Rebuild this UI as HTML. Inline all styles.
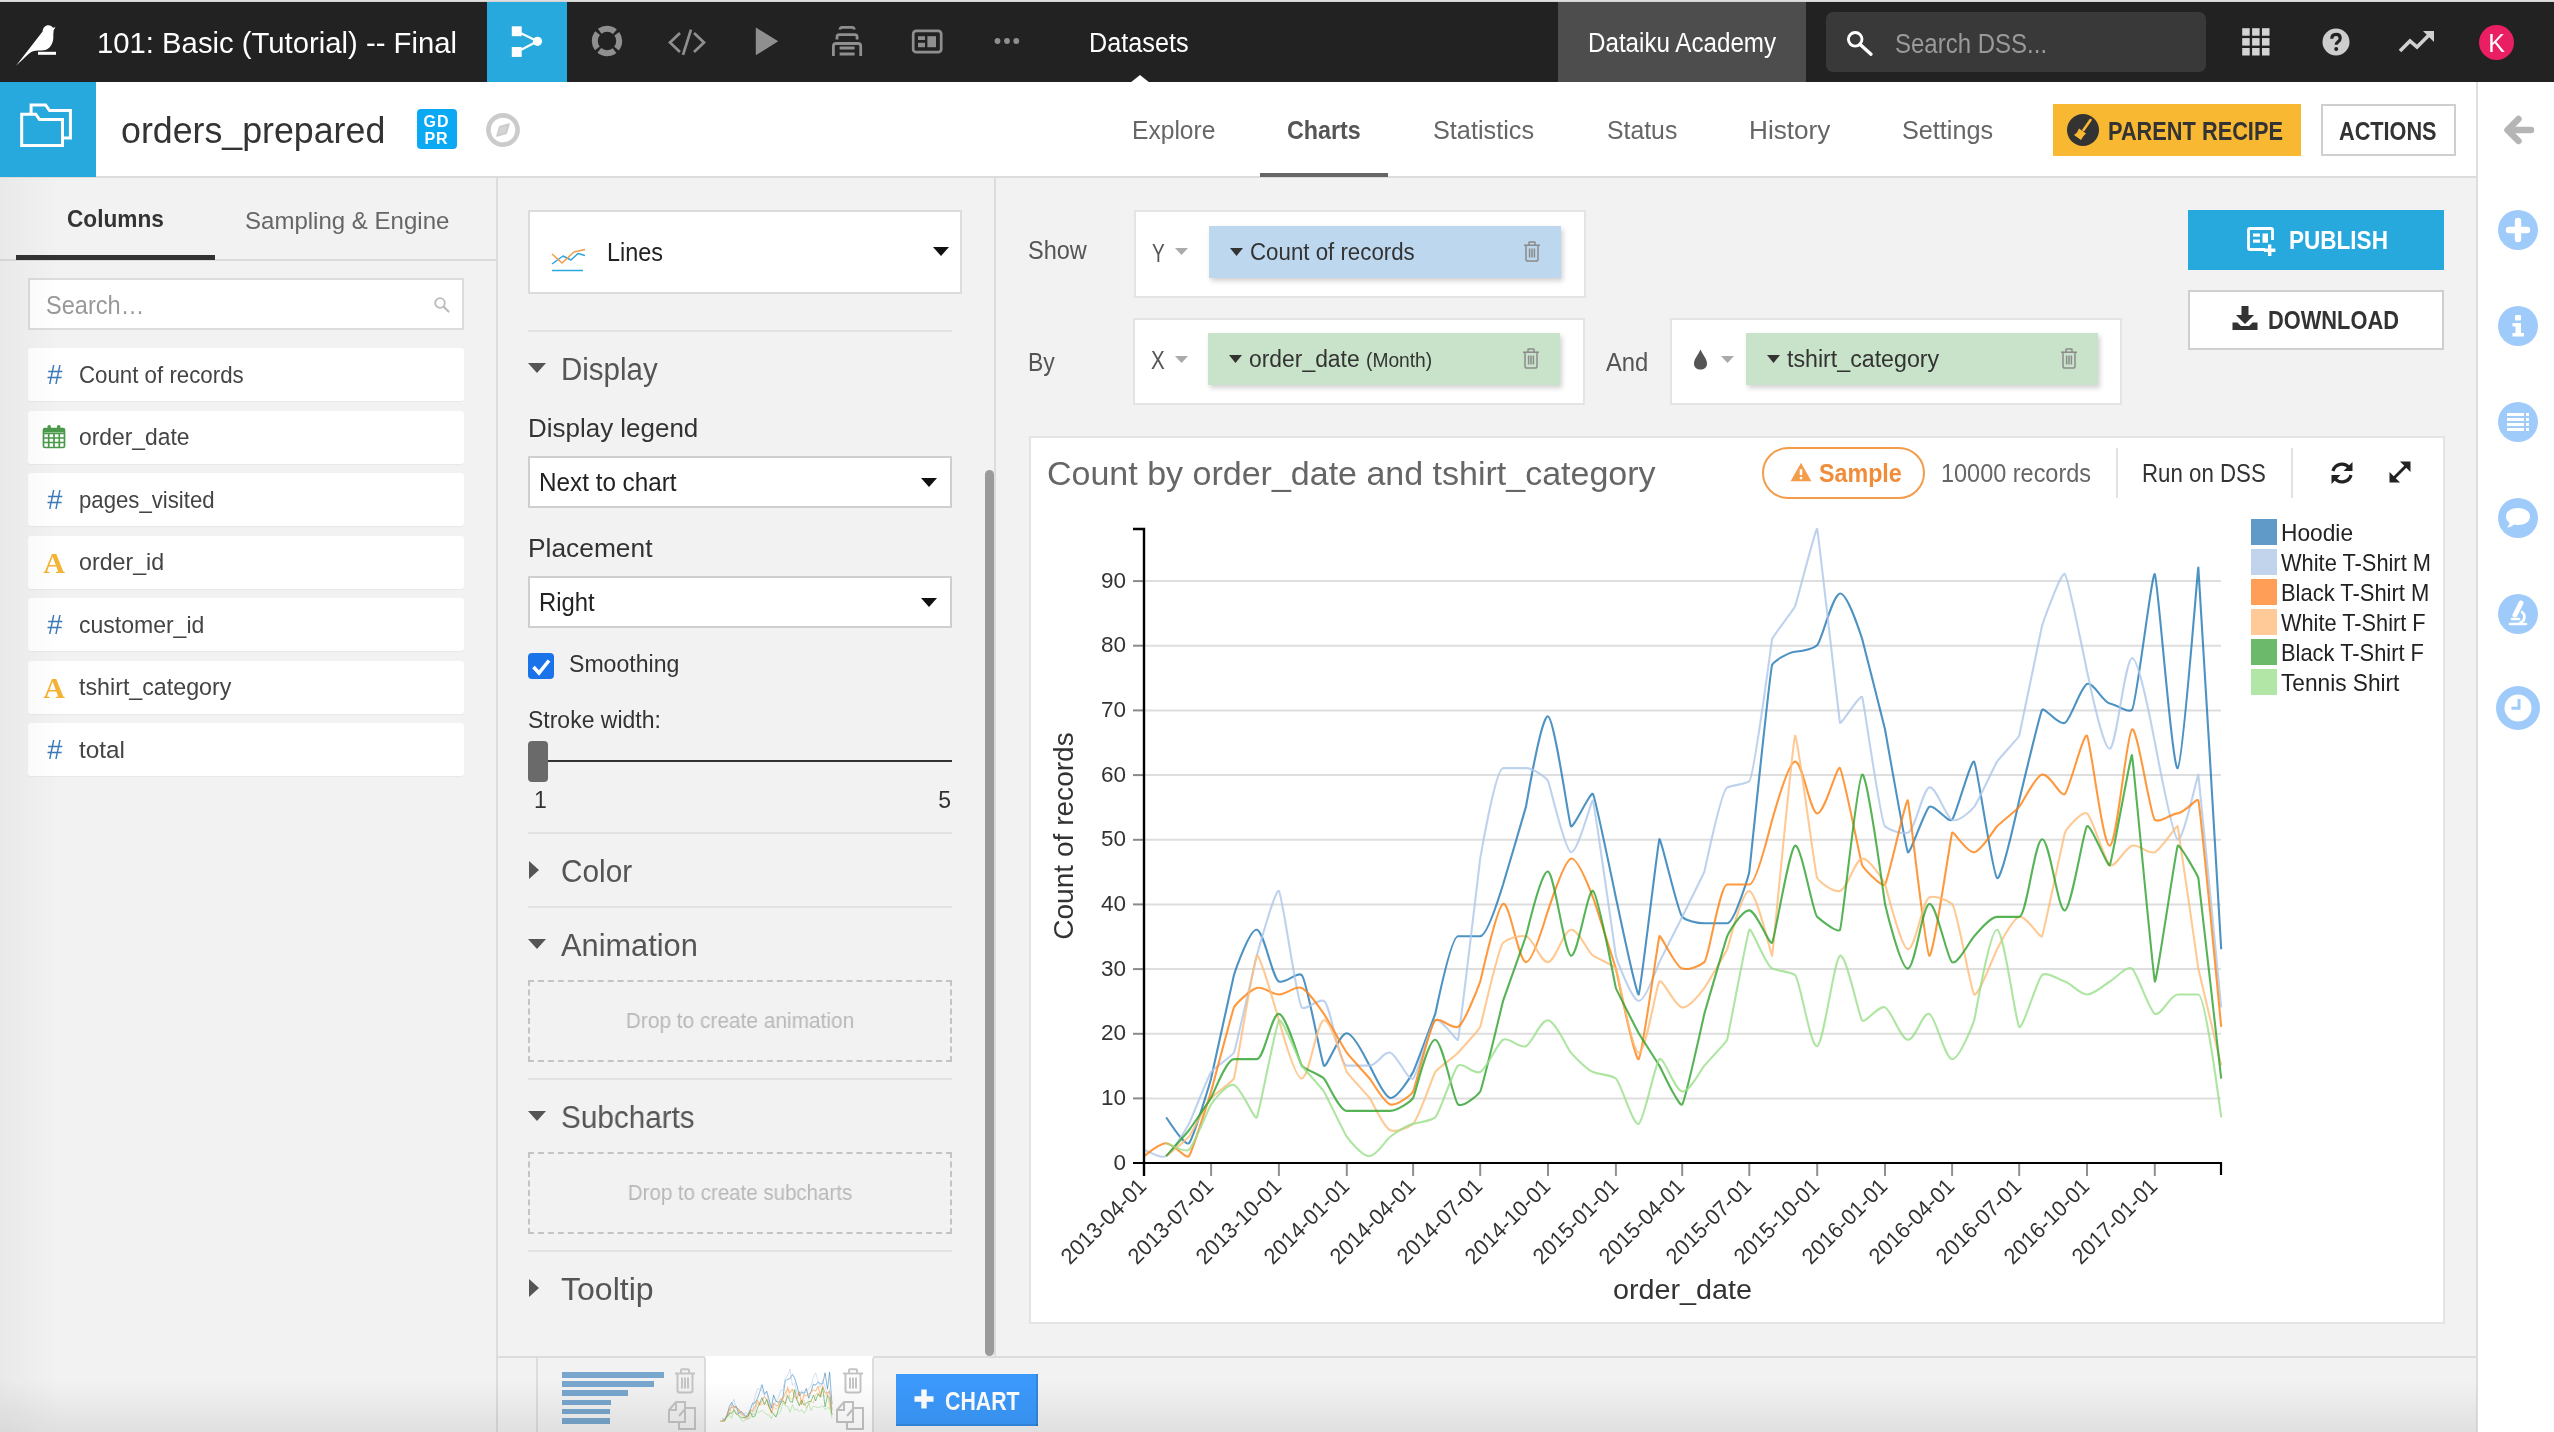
<!DOCTYPE html>
<html><head><meta charset="utf-8"><title>orders_prepared - Charts</title>
<style>
html,body{margin:0;padding:0;}
body{width:2554px;height:1432px;position:relative;overflow:hidden;background:#f2f2f2;font-family:"Liberation Sans",sans-serif;}
#app{position:absolute;left:0;top:0;width:2554px;height:1432px;will-change:transform;}
.r{position:absolute;box-sizing:border-box;display:block;}
.t{position:absolute;white-space:nowrap;line-height:1;display:block;}
</style></head>
<body>
<div id="app">
<div class="r" style="left:0px;top:0px;width:2554px;height:82px;background:#222222;"></div>
<div class="r" style="left:0px;top:0px;width:2554px;height:2px;background:linear-gradient(#e4e4e4,#cfcfcf);"></div>
<svg class="r" style="left:14px;top:22px;" width="46" height="46" viewBox="0 0 46 46"><path d="M2,43.8 L28.6,9.6 C28.8,5.6 31.4,3.2 34.3,3.2 C36.5,3.2 38,4.2 39,5.7 L41.5,5.3 L39.6,8.2 C39.7,10 39.2,12 39.3,14 C39.6,18 38.6,21 37,23.6 C35,26.6 33,28 30,28.3 C26,28.6 22,28.3 19,29.3 C16,30.3 13.6,32.8 11.6,34.8 Z" fill="#fff"/><rect x="24" y="29.8" width="18" height="3" fill="#fff"/></svg>
<span id="t1" class="t m" style="left:97.0px;top:28.0px;font-size:30px;color:#fff;font-weight:400;font-family:'Liberation Sans', sans-serif;transform-origin:left center;transform:scaleX(0.9756);">101: Basic (Tutorial) -- Final</span>
<div class="r" style="left:487px;top:2px;width:80px;height:80px;background:#28a9dd;"></div>
<svg class="r" style="left:508px;top:24px;" width="38" height="36" viewBox="0 0 38 36"><g fill="#fff"><rect x="3.8" y="2.3" width="9.9" height="9.9"/><rect x="3.8" y="23" width="9.9" height="9.9"/><circle cx="29.5" cy="17.3" r="4.6"/></g><path d="M8.8,7.2 L29.5,17.3 L8.8,28" fill="none" stroke="#fff" stroke-width="2.2"/></svg>
<svg class="r" style="left:590px;top:24.2px;" width="34" height="34" viewBox="0 0 34 34"><circle cx="17" cy="17" r="12.2" fill="none" stroke="#8f8f8f" stroke-width="6" stroke-dasharray="16.4 2.76" stroke-dashoffset="8.2"/></svg>
<svg class="r" style="left:666px;top:27px;" width="42" height="30" viewBox="0 0 42 30"><g fill="none" stroke="#8f8f8f" stroke-width="2.7" stroke-linecap="butt" stroke-linejoin="miter"><path d="M14,6 L4,15.5 L14,25"/><path d="M28,6 L38,15.5 L28,25"/><path d="M25,2.6 L17,27.8"/></g></svg>
<svg class="r" style="left:752px;top:26px;" width="28" height="32" viewBox="0 0 28 32"><path d="M3.8,1.4 L26.2,15.3 L3.8,29.3 Z" fill="#8f8f8f"/></svg>
<svg class="r" style="left:829px;top:24px;" width="36" height="34" viewBox="0 0 36 34"><g fill="none" stroke="#8f8f8f" stroke-width="2.8"><path d="M11,5.6 Q11,3.4 13.2,3.4 H23 Q25.2,3.4 25.2,5.6"/><path d="M8,15.6 V13 Q8,10.7 10.3,10.7 H25.8 Q28.1,10.7 28.1,13 V15.6"/><path d="M4.4,32 V22.2 Q4.4,19.5 7.1,19.5 H29 Q31.7,19.5 31.7,22.2 V32"/><path d="M10.6,24 H25.6 M10.6,30 H25.6"/></g></svg>
<svg class="r" style="left:910px;top:27px;" width="34" height="28" viewBox="0 0 34 28"><rect x="3.2" y="3.8" width="28" height="21.4" rx="3" fill="none" stroke="#8f8f8f" stroke-width="2.7"/><g fill="#8f8f8f"><rect x="8" y="9.2" width="7" height="3.8"/><rect x="8" y="15.8" width="7" height="4.4"/><rect x="17.4" y="9.2" width="8.6" height="11"/></g></svg>
<svg class="r" style="left:992px;top:36.2px;" width="30" height="10" viewBox="0 0 30 10"><g fill="#8f8f8f"><circle cx="5.5" cy="5" r="2.9"/><circle cx="15" cy="5" r="2.9"/><circle cx="24.3" cy="5" r="2.9"/></g></svg>
<span id="t2" class="t m" style="left:1089.0px;top:30.0px;font-size:27px;color:#fff;font-weight:400;font-family:'Liberation Sans', sans-serif;transform-origin:left center;transform:scaleX(0.9346);">Datasets</span>
<svg class="r" style="left:1130px;top:75px;" width="20" height="8" viewBox="0 0 20 8"><path d="M0,8 L10,0 L20,8 Z" fill="#fff"/></svg>
<div class="r" style="left:1558px;top:2px;width:248px;height:80px;background:#4d4d4d;"></div>
<span id="t3" class="t m" style="left:1588.0px;top:30.0px;font-size:27px;color:#fff;font-weight:400;font-family:'Liberation Sans', sans-serif;transform-origin:left center;transform:scaleX(0.8952);">Dataiku Academy</span>
<div class="r" style="left:1826px;top:12px;width:380px;height:60px;background:#393939;border-radius:7px;"></div>
<svg class="r" style="left:1842px;top:27px;" width="32" height="32" viewBox="0 0 32 32"><circle cx="13.2" cy="12.3" r="6.8" fill="none" stroke="#fff" stroke-width="2.9"/><path d="M18.2,17.4 L29,27.2" stroke="#fff" stroke-width="3.4" stroke-linecap="round"/></svg>
<span id="t4" class="t m" style="left:1895.0px;top:31.0px;font-size:27px;color:#9a9a9a;font-weight:400;font-family:'Liberation Sans', sans-serif;transform-origin:left center;transform:scaleX(0.8889);">Search DSS...</span>
<svg class="r" style="left:2242px;top:28.4px;" width="28" height="28" viewBox="0 0 28 28"><rect x="0.2" y="0.2" width="7.5" height="7.5" fill="#d4d4d4"/><rect x="0.2" y="10.1" width="7.5" height="7.5" fill="#d4d4d4"/><rect x="0.2" y="20" width="7.5" height="7.5" fill="#d4d4d4"/><rect x="10.1" y="0.2" width="7.5" height="7.5" fill="#d4d4d4"/><rect x="10.1" y="10.1" width="7.5" height="7.5" fill="#d4d4d4"/><rect x="10.1" y="20" width="7.5" height="7.5" fill="#d4d4d4"/><rect x="20" y="0.2" width="7.5" height="7.5" fill="#d4d4d4"/><rect x="20" y="10.1" width="7.5" height="7.5" fill="#d4d4d4"/><rect x="20" y="20" width="7.5" height="7.5" fill="#d4d4d4"/></svg>
<svg class="r" style="left:2321px;top:26.8px;" width="30" height="30" viewBox="0 0 30 30"><circle cx="15" cy="15" r="13.5" fill="#cdcdcd"/><path d="M10.8,11.8 Q10.8,7.4 15,7.4 Q19.2,7.4 19.2,11.2 Q19.2,13.4 17,14.8 Q15.2,16 15.2,17.8" fill="none" stroke="#222" stroke-width="3.2"/><circle cx="15.2" cy="22" r="2" fill="#222"/></svg>
<svg class="r" style="left:2398px;top:29px;" width="38" height="26" viewBox="0 0 38 26"><path d="M2,22 L12,12 L19,18 L32,5" fill="none" stroke="#d0d0d0" stroke-width="3.6"/><path d="M25,2 L36,2 L36,13 Z" fill="#d0d0d0"/></svg>
<div class="r" style="left:2479px;top:24.5px;width:35px;height:35px;background:#ea1e63;border-radius:50%;"></div>
<span id="t5" class="t" style="left:2496.5px;top:30.7px;font-size:25px;color:#fff;font-weight:400;font-family:'Liberation Sans', sans-serif;transform-origin:center center;transform:translateX(-50%) scaleX(1.0000);">K</span>
<div class="r" style="left:0px;top:82px;width:2477px;height:95px;background:#fff;"></div>
<div class="r" style="left:0px;top:176px;width:2554px;height:2px;background:#dcdcdc;"></div>
<div class="r" style="left:0px;top:82px;width:96px;height:95px;background:#28a9dd;"></div>
<svg class="r" style="left:18px;top:101px;" width="56" height="48" viewBox="0 0 56 48"><g fill="none" stroke="#fff" stroke-width="3" stroke-linejoin="miter"><path d="M13.1,12 V4 H27.6 L31.5,9.5 H52.4 V36.9 H46"/><path d="M3.7,13.2 H17.8 L21.5,18.5 H44.5 V44.5 H3.7 Z"/></g></svg>
<span id="t6" class="t m" style="left:121.0px;top:112.2px;font-size:37.5px;color:#333;font-weight:400;font-family:'Liberation Sans', sans-serif;transform-origin:left center;transform:scaleX(0.9531);">orders_prepared</span>
<div class="r" style="left:416.5px;top:109px;width:40px;height:40px;background:#0aa9f4;border-radius:4px;"></div>
<span id="t7" class="t" style="left:436.5px;top:114.4px;font-size:16px;color:#fff;font-weight:700;font-family:'Liberation Sans', sans-serif;transform-origin:center center;transform:translateX(-50%) scaleX(1.0000);letter-spacing:1px;">GD</span>
<span id="t8" class="t" style="left:436.5px;top:131.4px;font-size:16px;color:#fff;font-weight:700;font-family:'Liberation Sans', sans-serif;transform-origin:center center;transform:translateX(-50%) scaleX(1.0000);letter-spacing:1px;">PR</span>
<svg class="r" style="left:485px;top:112px;" width="36" height="36" viewBox="0 0 36 36"><circle cx="18" cy="18" r="14.6" fill="none" stroke="#cbcbcb" stroke-width="4.6"/><path d="M24,12 L21.2,21.2 L12,24 L14.8,14.8 Z" fill="#d4d4d4" stroke="#cbcbcb" stroke-width="1.6" stroke-linejoin="round"/></svg>
<span id="t9" class="t m" style="left:1132.0px;top:118.3px;font-size:25.5px;color:#666;font-weight:400;font-family:'Liberation Sans', sans-serif;transform-origin:left center;transform:scaleX(0.9651);">Explore</span>
<span id="t10" class="t m" style="left:1287.0px;top:118.3px;font-size:25.5px;color:#555;font-weight:700;font-family:'Liberation Sans', sans-serif;transform-origin:left center;transform:scaleX(0.9136);">Charts</span>
<span id="t11" class="t m" style="left:1433.0px;top:118.3px;font-size:25.5px;color:#666;font-weight:400;font-family:'Liberation Sans', sans-serif;transform-origin:left center;transform:scaleX(0.9902);">Statistics</span>
<span id="t12" class="t m" style="left:1607.0px;top:118.3px;font-size:25.5px;color:#666;font-weight:400;font-family:'Liberation Sans', sans-serif;transform-origin:left center;transform:scaleX(0.9722);">Status</span>
<span id="t13" class="t m" style="left:1749.0px;top:118.3px;font-size:25.5px;color:#666;font-weight:400;font-family:'Liberation Sans', sans-serif;transform-origin:left center;transform:scaleX(1.0253);">History</span>
<span id="t14" class="t m" style="left:1902.0px;top:118.3px;font-size:25.5px;color:#666;font-weight:400;font-family:'Liberation Sans', sans-serif;transform-origin:left center;transform:scaleX(0.9891);">Settings</span>
<div class="r" style="left:1260px;top:173px;width:128px;height:4.4px;background:#666;"></div>
<div class="r" style="left:2053px;top:104px;width:248px;height:52px;background:#f9b832;"></div>
<svg class="r" style="left:2066px;top:113px;" width="34" height="34" viewBox="0 0 34 34"><circle cx="17" cy="17" r="16" fill="#333"/><path d="M24.5,7 L17.5,17" stroke="#f9b832" stroke-width="2.6" stroke-linecap="round"/><path d="M13,15.5 L20,20.5 L17.5,23 L15,27 L8,22 L11,19.5 Z" fill="#f9b832"/></svg>
<span id="t15" class="t m" style="left:2108.0px;top:119.2px;font-size:25px;color:#333;font-weight:700;font-family:'Liberation Sans', sans-serif;transform-origin:left center;transform:scaleX(0.8706);">PARENT RECIPE</span>
<div class="r" style="left:2321px;top:104px;width:135px;height:52px;background:#fff;border:2px solid #cfcfcf;"></div>
<span id="t16" class="t m" style="left:2339.0px;top:119.2px;font-size:25px;color:#333;font-weight:700;font-family:'Liberation Sans', sans-serif;transform-origin:left center;transform:scaleX(0.8673);">ACTIONS</span>
<div class="r" style="left:2477px;top:82px;width:77px;height:1350px;background:#fff;"></div>
<div class="r" style="left:2476px;top:82px;width:2px;height:1350px;background:#dedede;"></div>
<svg class="r" style="left:2502px;top:114px;" width="34" height="32" viewBox="0 0 34 32"><path d="M29,16 H9 M16.5,5 L5.5,16 L16.5,27" fill="none" stroke="#b5b5b5" stroke-width="6.5" stroke-linejoin="round" stroke-linecap="round"/></svg>
<div class="r" style="left:2498px;top:210px;width:40px;height:40px;background:#9fcbfb;border-radius:50%;"></div>
<div class="r" style="left:2498px;top:306px;width:40px;height:40px;background:#9fcbfb;border-radius:50%;"></div>
<div class="r" style="left:2498px;top:402px;width:40px;height:40px;background:#9fcbfb;border-radius:50%;"></div>
<div class="r" style="left:2498px;top:498px;width:40px;height:40px;background:#9fcbfb;border-radius:50%;"></div>
<div class="r" style="left:2498px;top:594px;width:40px;height:40px;background:#9fcbfb;border-radius:50%;"></div>
<div class="r" style="left:2496px;top:686px;width:44px;height:44px;background:#9fcbfb;border-radius:50%;"></div>
<svg class="r" style="left:2497px;top:209px;" width="42" height="42" viewBox="0 0 42 42"><path d="M21,12 V30 M12,21 H30" stroke="#fff" stroke-width="6.4" stroke-linecap="round"/></svg>
<svg class="r" style="left:2497px;top:305px;" width="42" height="42" viewBox="0 0 42 42"><g fill="#fff"><rect x="18" y="10" width="6" height="5.5" rx="1"/><path d="M15.5,18 H24 V28 H27 V31.5 H15.5 V28 H18.5 V21.5 H15.5 Z"/></g></svg>
<svg class="r" style="left:2497px;top:401px;" width="42" height="42" viewBox="0 0 42 42"><g fill="#fff"><rect x="10" y="12" width="17" height="3"/><rect x="10" y="17" width="17" height="3"/><rect x="10" y="22" width="17" height="3"/><rect x="10" y="27" width="17" height="3"/><rect x="29" y="12" width="3" height="3"/><rect x="29" y="17" width="3" height="3"/><rect x="29" y="22" width="3" height="3"/><rect x="29" y="27" width="3" height="3"/></g></svg>
<svg class="r" style="left:2497px;top:497px;" width="42" height="42" viewBox="0 0 42 42"><path d="M21,11 C28,11 33,14.5 33,19.5 C33,24.5 28,28 21,28 C19.5,28 18,27.8 17,27.5 C15,29.5 12.5,30.5 10,30.5 C11.5,29 12.3,27.5 12.5,25.5 C10,24 9,22 9,19.5 C9,14.5 14,11 21,11 Z" fill="#fff"/></svg>
<svg class="r" style="left:2497px;top:593px;" width="42" height="42" viewBox="0 0 42 42"><g fill="none" stroke="#fff" stroke-width="2.6" stroke-linecap="round"><path d="M24,10 L18,22" stroke-width="5"/><path d="M25,19 C29,22 28,28 23,30"/><path d="M13,31 H29"/><path d="M15,26 H22"/></g></svg>
<svg class="r" style="left:2495px;top:685px;" width="46" height="46" viewBox="0 0 46 46"><circle cx="23" cy="23" r="13.5" fill="#fff"/><path d="M24,14 V23.2 H16.4" fill="none" stroke="#9fcbfb" stroke-width="3"/></svg>
<div class="r" style="left:496px;top:178px;width:2px;height:1254px;background:#dcdcdc;"></div>
<span id="t17" class="t m" style="left:67.0px;top:207.2px;font-size:24.5px;color:#333;font-weight:700;font-family:'Liberation Sans', sans-serif;transform-origin:left center;transform:scaleX(0.9238);">Columns</span>
<span id="t18" class="t m" style="left:245.0px;top:209.2px;font-size:24.5px;color:#666;font-weight:400;font-family:'Liberation Sans', sans-serif;transform-origin:left center;transform:scaleX(0.9808);">Sampling &amp; Engine</span>
<div class="r" style="left:0px;top:259px;width:497px;height:2px;background:#dcdcdc;"></div>
<div class="r" style="left:16px;top:255px;width:199px;height:5px;background:#333;"></div>
<div class="r" style="left:28px;top:278px;width:436px;height:52px;background:#fff;border:2px solid #dcdcdc;"></div>
<span id="t19" class="t m" style="left:46.0px;top:292.7px;font-size:25px;color:#999;font-weight:400;font-family:'Liberation Sans', sans-serif;transform-origin:left center;transform:scaleX(0.9423);">Search&#8230;</span>
<svg class="r" style="left:433px;top:296px;" width="18" height="18" viewBox="0 0 18 18"><circle cx="7" cy="7" r="4.8" fill="none" stroke="#bbb" stroke-width="1.8"/><path d="M10.5,10.5 L15.5,15.5" stroke="#bbb" stroke-width="2.2" stroke-linecap="round"/></svg>
<div class="r" style="left:28px;top:348px;width:436px;height:53px;background:#fff;border-radius:3px;box-shadow:0 1px 1px rgba(0,0,0,0.04);"></div>
<span id="t20" class="t" style="left:54.5px;top:362.0px;font-size:27px;color:#3d7ab8;font-weight:400;font-family:'Liberation Sans', sans-serif;transform-origin:center center;transform:translateX(-50%) scaleX(1.0000);font-style:italic;">#</span>
<span id="t21" class="t m" style="left:79.0px;top:362.8px;font-size:24.3px;color:#444;font-weight:400;font-family:'Liberation Sans', sans-serif;transform-origin:left center;transform:scaleX(0.9167);">Count of records</span>
<div class="r" style="left:28px;top:410.5px;width:436px;height:53px;background:#fff;border-radius:3px;box-shadow:0 1px 1px rgba(0,0,0,0.04);"></div>
<svg class="r" style="left:42px;top:424px;" width="24" height="25" viewBox="0 0 24 25"><g fill="none" stroke="#4b9a4b" stroke-width="1.7"><rect x="1.5" y="4.5" width="21" height="19" rx="1.5"/><path d="M1.5,9.5 H22.5 M1.5,14 H22.5 M1.5,18.5 H22.5 M6.7,9.5 V23.5 M12,9.5 V23.5 M17.3,9.5 V23.5"/></g><g fill="#4b9a4b"><rect x="1.5" y="4.5" width="21" height="4"/><rect x="5.5" y="1" width="3.4" height="6.5" rx="1.5"/><rect x="15" y="1" width="3.4" height="6.5" rx="1.5"/></g></svg>
<span id="t22" class="t m" style="left:79.0px;top:425.3px;font-size:24.3px;color:#444;font-weight:400;font-family:'Liberation Sans', sans-serif;transform-origin:left center;transform:scaleX(0.9407);">order_date</span>
<div class="r" style="left:28px;top:473px;width:436px;height:53px;background:#fff;border-radius:3px;box-shadow:0 1px 1px rgba(0,0,0,0.04);"></div>
<span id="t23" class="t" style="left:54.5px;top:487.0px;font-size:27px;color:#3d7ab8;font-weight:400;font-family:'Liberation Sans', sans-serif;transform-origin:center center;transform:translateX(-50%) scaleX(1.0000);font-style:italic;">#</span>
<span id="t24" class="t m" style="left:79.0px;top:487.8px;font-size:24.3px;color:#444;font-weight:400;font-family:'Liberation Sans', sans-serif;transform-origin:left center;transform:scaleX(0.9128);">pages_visited</span>
<div class="r" style="left:28px;top:535.5px;width:436px;height:53px;background:#fff;border-radius:3px;box-shadow:0 1px 1px rgba(0,0,0,0.04);"></div>
<span id="t25" class="t" style="left:54.0px;top:547.6px;font-size:30px;color:#f5b335;font-weight:700;font-family:'Liberation Serif', serif;transform-origin:center center;transform:translateX(-50%) scaleX(1.0000);">A</span>
<span id="t26" class="t m" style="left:79.0px;top:550.3px;font-size:24.3px;color:#444;font-weight:400;font-family:'Liberation Sans', sans-serif;transform-origin:left center;transform:scaleX(0.9551);">order_id</span>
<div class="r" style="left:28px;top:598px;width:436px;height:53px;background:#fff;border-radius:3px;box-shadow:0 1px 1px rgba(0,0,0,0.04);"></div>
<span id="t27" class="t" style="left:54.5px;top:612.0px;font-size:27px;color:#3d7ab8;font-weight:400;font-family:'Liberation Sans', sans-serif;transform-origin:center center;transform:translateX(-50%) scaleX(1.0000);font-style:italic;">#</span>
<span id="t28" class="t m" style="left:79.0px;top:612.8px;font-size:24.3px;color:#444;font-weight:400;font-family:'Liberation Sans', sans-serif;transform-origin:left center;transform:scaleX(0.9470);">customer_id</span>
<div class="r" style="left:28px;top:660.5px;width:436px;height:53px;background:#fff;border-radius:3px;box-shadow:0 1px 1px rgba(0,0,0,0.04);"></div>
<span id="t29" class="t" style="left:54.0px;top:672.6px;font-size:30px;color:#f5b335;font-weight:700;font-family:'Liberation Serif', serif;transform-origin:center center;transform:translateX(-50%) scaleX(1.0000);">A</span>
<span id="t30" class="t m" style="left:79.0px;top:675.3px;font-size:24.3px;color:#444;font-weight:400;font-family:'Liberation Sans', sans-serif;transform-origin:left center;transform:scaleX(0.9560);">tshirt_category</span>
<div class="r" style="left:28px;top:723px;width:436px;height:53px;background:#fff;border-radius:3px;box-shadow:0 1px 1px rgba(0,0,0,0.04);"></div>
<span id="t31" class="t" style="left:54.5px;top:737.0px;font-size:27px;color:#3d7ab8;font-weight:400;font-family:'Liberation Sans', sans-serif;transform-origin:center center;transform:translateX(-50%) scaleX(1.0000);font-style:italic;">#</span>
<span id="t32" class="t m" style="left:79.0px;top:737.8px;font-size:24.3px;color:#444;font-weight:400;font-family:'Liberation Sans', sans-serif;transform-origin:left center;">total</span>
<div class="r" style="left:994px;top:178px;width:2px;height:1180px;background:#dcdcdc;"></div>
<div class="r" style="left:985px;top:470px;width:9px;height:886px;background:#9b9b9b;border-radius:5px;"></div>
<div class="r" style="left:528px;top:210px;width:434px;height:84px;background:#fff;border:2px solid #dcdcdc;"></div>
<svg class="r" style="left:550px;top:244px;" width="38" height="30" viewBox="0 0 38 30"><g fill="none" stroke-width="1.5" stroke-linejoin="round"><path d="M2,26.5 H33" stroke="#2aa7dc"/><path d="M2,20 L13,12 L21,16 L28,9.5 L35,11.5" stroke="#2aa7dc"/><path d="M2,10 L12,19 L24,8 L35,5.5" stroke="#f39c4a"/></g></svg>
<span id="t33" class="t m" style="left:607.0px;top:240.3px;font-size:25.5px;color:#222;font-weight:400;font-family:'Liberation Sans', sans-serif;transform-origin:left center;transform:scaleX(0.9180);">Lines</span>
<svg class="r" style="left:933px;top:246.5px;" width="16" height="9" viewBox="0 0 16 9"><path d="M0,0 H16 L8,9 Z" fill="#111"/></svg>
<div class="r" style="left:528px;top:330px;width:424px;height:2px;background:#e2e2e2;"></div>
<svg class="r" style="left:528px;top:363px;" width="18" height="10" viewBox="0 0 18 10"><path d="M0,0 H18 L9,10 Z" fill="#555"/></svg>
<span id="t34" class="t m" style="left:561.0px;top:353.7px;font-size:31px;color:#555;font-weight:400;font-family:'Liberation Sans', sans-serif;transform-origin:left center;transform:scaleX(0.9510);">Display</span>
<span id="t35" class="t m" style="left:528.0px;top:416.3px;font-size:25.5px;color:#333;font-weight:400;font-family:'Liberation Sans', sans-serif;transform-origin:left center;transform:scaleX(1.0180);">Display legend</span>
<div class="r" style="left:528px;top:456px;width:424px;height:52px;background:#fff;border:2px solid #cfcfcf;"></div>
<span id="t36" class="t m" style="left:539.0px;top:470.3px;font-size:25.5px;color:#222;font-weight:400;font-family:'Liberation Sans', sans-serif;transform-origin:left center;transform:scaleX(0.9517);">Next to chart</span>
<svg class="r" style="left:921px;top:477.5px;" width="16" height="9" viewBox="0 0 16 9"><path d="M0,0 H16 L8,9 Z" fill="#111"/></svg>
<span id="t37" class="t m" style="left:528.0px;top:536.3px;font-size:25.5px;color:#333;font-weight:400;font-family:'Liberation Sans', sans-serif;transform-origin:left center;transform:scaleX(1.0333);">Placement</span>
<div class="r" style="left:528px;top:576px;width:424px;height:52px;background:#fff;border:2px solid #cfcfcf;"></div>
<span id="t38" class="t m" style="left:539.0px;top:590.3px;font-size:25.5px;color:#222;font-weight:400;font-family:'Liberation Sans', sans-serif;transform-origin:left center;transform:scaleX(0.9333);">Right</span>
<svg class="r" style="left:921px;top:597.5px;" width="16" height="9" viewBox="0 0 16 9"><path d="M0,0 H16 L8,9 Z" fill="#111"/></svg>
<div class="r" style="left:528px;top:653px;width:26px;height:26px;background:#1a73e8;border-radius:4px;"></div>
<svg class="r" style="left:528px;top:652.5px;" width="27" height="27" viewBox="0 0 27 27"><path d="M5.5,14 L11,20 L21,7.5" fill="none" stroke="#fff" stroke-width="3.6" stroke-linecap="butt"/></svg>
<span id="t39" class="t m" style="left:569.0px;top:653.0px;font-size:23.5px;color:#333;font-weight:400;font-family:'Liberation Sans', sans-serif;transform-origin:left center;transform:scaleX(0.9821);">Smoothing</span>
<span id="t40" class="t m" style="left:528.0px;top:709.0px;font-size:23.5px;color:#333;font-weight:400;font-family:'Liberation Sans', sans-serif;transform-origin:left center;transform:scaleX(0.9779);">Stroke width:</span>
<div class="r" style="left:548px;top:759.6px;width:404px;height:2px;background:#333;"></div>
<div class="r" style="left:528px;top:741px;width:20px;height:41px;background:#6a6a6a;border-radius:4px;"></div>
<span id="t41" class="t" style="left:534.0px;top:789.4px;font-size:23px;color:#333;font-weight:400;font-family:'Liberation Sans', sans-serif;transform-origin:left center;">1</span>
<span id="t42" class="t" style="right:1603.0px;top:789.4px;font-size:23px;color:#333;font-weight:400;font-family:'Liberation Sans', sans-serif;transform-origin:right center;">5</span>
<div class="r" style="left:528px;top:832px;width:424px;height:2px;background:#e2e2e2;"></div>
<svg class="r" style="left:528.5px;top:861px;" width="10" height="18" viewBox="0 0 10 18"><path d="M0,0 V18 L10,9 Z" fill="#555"/></svg>
<span id="t43" class="t m" style="left:561.0px;top:855.7px;font-size:31px;color:#555;font-weight:400;font-family:'Liberation Sans', sans-serif;transform-origin:left center;transform:scaleX(0.9595);">Color</span>
<div class="r" style="left:528px;top:906px;width:424px;height:2px;background:#e2e2e2;"></div>
<svg class="r" style="left:528px;top:939px;" width="18" height="10" viewBox="0 0 18 10"><path d="M0,0 H18 L9,10 Z" fill="#555"/></svg>
<span id="t44" class="t m" style="left:561.0px;top:929.7px;font-size:31px;color:#555;font-weight:400;font-family:'Liberation Sans', sans-serif;transform-origin:left center;transform:scaleX(0.9928);">Animation</span>
<div class="r" style="left:528px;top:980px;width:424px;height:82px;background:none;border:2px dashed #c4c4c4;"></div>
<span id="t45" class="t m" style="left:740.0px;top:1010.7px;font-size:21.5px;color:#b8b8b8;font-weight:400;font-family:'Liberation Sans', sans-serif;transform-origin:center center;transform:translateX(-50%) scaleX(0.9702);">Drop to create animation</span>
<div class="r" style="left:528px;top:1078px;width:424px;height:2px;background:#e2e2e2;"></div>
<svg class="r" style="left:528px;top:1111px;" width="18" height="10" viewBox="0 0 18 10"><path d="M0,0 H18 L9,10 Z" fill="#555"/></svg>
<span id="t46" class="t m" style="left:561.0px;top:1101.7px;font-size:31px;color:#555;font-weight:400;font-family:'Liberation Sans', sans-serif;transform-origin:left center;transform:scaleX(0.9571);">Subcharts</span>
<div class="r" style="left:528px;top:1152px;width:424px;height:82px;background:none;border:2px dashed #c4c4c4;"></div>
<span id="t47" class="t m" style="left:740.0px;top:1182.7px;font-size:21.5px;color:#b8b8b8;font-weight:400;font-family:'Liberation Sans', sans-serif;transform-origin:center center;transform:translateX(-50%) scaleX(0.9532);">Drop to create subcharts</span>
<div class="r" style="left:528px;top:1250px;width:424px;height:2px;background:#e2e2e2;"></div>
<svg class="r" style="left:528.5px;top:1279px;" width="10" height="18" viewBox="0 0 10 18"><path d="M0,0 V18 L10,9 Z" fill="#555"/></svg>
<span id="t48" class="t m" style="left:561.0px;top:1273.7px;font-size:31px;color:#555;font-weight:400;font-family:'Liberation Sans', sans-serif;transform-origin:left center;transform:scaleX(1.0333);">Tooltip</span>
<span id="t49" class="t m" style="left:1028.0px;top:238.3px;font-size:25.5px;color:#555;font-weight:400;font-family:'Liberation Sans', sans-serif;transform-origin:left center;transform:scaleX(0.9219);">Show</span>
<div class="r" style="left:1134px;top:210px;width:452px;height:88px;background:#fff;border:2px solid #e4e4e4;"></div>
<span id="t50" class="t m" style="left:1152.0px;top:240.7px;font-size:25px;color:#555;font-weight:400;font-family:'Liberation Sans', sans-serif;transform-origin:left center;transform:scaleX(0.7647);">Y</span>
<svg class="r" style="left:1174.5px;top:248px;" width="13" height="7" viewBox="0 0 13 7"><path d="M0,0 H13 L6.5,7 Z" fill="#aaa"/></svg>
<div class="r" style="left:1209px;top:226px;width:352px;height:52px;background:#bdd7ee;box-shadow:2px 3px 5px rgba(0,0,0,0.18);"></div>
<svg class="r" style="left:1229.5px;top:248px;" width="13" height="8" viewBox="0 0 13 8"><path d="M0,0 H13 L6.5,8 Z" fill="#333"/></svg>
<span id="t51" class="t m" style="left:1250.0px;top:241.0px;font-size:23.5px;color:#333;font-weight:400;font-family:'Liberation Sans', sans-serif;transform-origin:left center;transform:scaleX(0.9483);">Count of records</span>
<svg class="r" style="left:1523px;top:240.5px;" width="18" height="21" viewBox="0 0 18 21"><g fill="none" stroke="#8a8a8a" stroke-width="1.5"><path d="M1,4.2 H17"/><path d="M6,4 V1.6 Q6,1 6.6,1 H11.4 Q12,1 12,1.6 V4"/><path d="M3,4.5 V18.2 Q3,20 4.8,20 H13.2 Q15,20 15,18.2 V4.5"/><path d="M6.6,7.5 V16.5 M9,7.5 V16.5 M11.4,7.5 V16.5"/></g></svg>
<span id="t52" class="t m" style="left:1028.0px;top:350.3px;font-size:25.5px;color:#555;font-weight:400;font-family:'Liberation Sans', sans-serif;transform-origin:left center;transform:scaleX(0.9000);">By</span>
<div class="r" style="left:1133px;top:318px;width:452px;height:87px;background:#fff;border:2px solid #e4e4e4;"></div>
<span id="t53" class="t m" style="left:1151.0px;top:347.7px;font-size:25px;color:#555;font-weight:400;font-family:'Liberation Sans', sans-serif;transform-origin:left center;transform:scaleX(0.8235);">X</span>
<svg class="r" style="left:1174.5px;top:356px;" width="13" height="7" viewBox="0 0 13 7"><path d="M0,0 H13 L6.5,7 Z" fill="#aaa"/></svg>
<div class="r" style="left:1208px;top:333px;width:352px;height:52px;background:#c8e3c9;box-shadow:2px 3px 5px rgba(0,0,0,0.18);"></div>
<svg class="r" style="left:1228.5px;top:355px;" width="13" height="8" viewBox="0 0 13 8"><path d="M0,0 H13 L6.5,8 Z" fill="#333"/></svg>
<span id="t54" class="t m" style="left:1249.0px;top:348.0px;font-size:23.5px;color:#333;font-weight:400;font-family:'Liberation Sans', sans-serif;transform-origin:left center;transform:scaleX(0.9737);">order_date</span>
<span id="t55" class="t m" style="left:1365.5px;top:350.9px;font-size:19.5px;color:#333;font-weight:400;font-family:'Liberation Sans', sans-serif;transform-origin:left center;transform:scaleX(0.9851);">(Month)</span>
<svg class="r" style="left:1522px;top:347.5px;" width="18" height="21" viewBox="0 0 18 21"><g fill="none" stroke="#8a8a8a" stroke-width="1.5"><path d="M1,4.2 H17"/><path d="M6,4 V1.6 Q6,1 6.6,1 H11.4 Q12,1 12,1.6 V4"/><path d="M3,4.5 V18.2 Q3,20 4.8,20 H13.2 Q15,20 15,18.2 V4.5"/><path d="M6.6,7.5 V16.5 M9,7.5 V16.5 M11.4,7.5 V16.5"/></g></svg>
<span id="t56" class="t m" style="left:1606.0px;top:350.3px;font-size:25.5px;color:#555;font-weight:400;font-family:'Liberation Sans', sans-serif;transform-origin:left center;transform:scaleX(0.9333);">And</span>
<div class="r" style="left:1670px;top:318px;width:452px;height:87px;background:#fff;border:2px solid #e4e4e4;"></div>
<svg class="r" style="left:1692px;top:348px;" width="17" height="23" viewBox="0 0 17 23"><path d="M8.5,1.5 C11,7 15,11 15,15.5 C15,19.5 12,21.5 8.5,21.5 C5,21.5 2,19.5 2,15.5 C2,11 6,7 8.5,1.5 Z" fill="#555"/></svg>
<svg class="r" style="left:1720.5px;top:356px;" width="13" height="7" viewBox="0 0 13 7"><path d="M0,0 H13 L6.5,7 Z" fill="#aaa"/></svg>
<div class="r" style="left:1746px;top:333px;width:352px;height:52px;background:#c8e3c9;box-shadow:2px 3px 5px rgba(0,0,0,0.18);"></div>
<svg class="r" style="left:1766.5px;top:355px;" width="13" height="8" viewBox="0 0 13 8"><path d="M0,0 H13 L6.5,8 Z" fill="#333"/></svg>
<span id="t57" class="t m" style="left:1787.0px;top:348.0px;font-size:23.5px;color:#333;font-weight:400;font-family:'Liberation Sans', sans-serif;transform-origin:left center;transform:scaleX(0.9870);">tshirt_category</span>
<svg class="r" style="left:2060px;top:347.5px;" width="18" height="21" viewBox="0 0 18 21"><g fill="none" stroke="#8a8a8a" stroke-width="1.5"><path d="M1,4.2 H17"/><path d="M6,4 V1.6 Q6,1 6.6,1 H11.4 Q12,1 12,1.6 V4"/><path d="M3,4.5 V18.2 Q3,20 4.8,20 H13.2 Q15,20 15,18.2 V4.5"/><path d="M6.6,7.5 V16.5 M9,7.5 V16.5 M11.4,7.5 V16.5"/></g></svg>
<div class="r" style="left:2188px;top:210px;width:256px;height:60px;background:#28a9dd;"></div>
<svg class="r" style="left:2246px;top:225px;" width="32" height="32" viewBox="0 0 32 32"><g fill="none" stroke="#fff" stroke-width="2.8"><path d="M19,24.5 H4 Q2.5,24.5 2.5,23 V5 Q2.5,3.5 4,3.5 H25 Q26.5,3.5 26.5,5 V15"/></g><g fill="#fff"><rect x="7" y="8.5" width="7" height="3.2"/><rect x="7" y="14.5" width="7" height="3.2"/><rect x="16.5" y="8.5" width="5.5" height="9.2"/><path d="M22,19.5 h3.4 v4 h4 v3.4 h-4 v4 h-3.4 v-4 h-4 v-3.4 h4 Z"/></g></svg>
<span id="t58" class="t m" style="left:2289.0px;top:228.3px;font-size:25.5px;color:#fff;font-weight:700;font-family:'Liberation Sans', sans-serif;transform-origin:left center;transform:scaleX(0.8839);">PUBLISH</span>
<div class="r" style="left:2188px;top:290px;width:256px;height:60px;background:#fff;border:2px solid #cfcfcf;"></div>
<svg class="r" style="left:2231px;top:305px;" width="28" height="26" viewBox="0 0 28 26"><g fill="#333"><path d="M10.5,1 H17.5 V10 H23 L14,19 L5,10 H10.5 Z"/><path d="M1.5,17.5 H6.5 L10,21 H18 L21.5,17.5 H26.5 V25 H1.5 Z"/></g></svg>
<span id="t59" class="t m" style="left:2268.0px;top:308.3px;font-size:25.5px;color:#333;font-weight:700;font-family:'Liberation Sans', sans-serif;transform-origin:left center;transform:scaleX(0.8562);">DOWNLOAD</span>
<div class="r" style="left:1029px;top:436px;width:1416px;height:888px;background:#fff;border:2px solid #e4e4e4;"></div>
<span id="t60" class="t m" style="left:1047.0px;top:456.1px;font-size:34px;color:#666;font-weight:400;font-family:'Liberation Sans', sans-serif;transform-origin:left center;">Count by order_date and tshirt_category</span>
<div class="r" style="left:1762px;top:447px;width:163px;height:52px;background:#fff;border:2px solid #f39c4a;border-radius:26px;"></div>
<svg class="r" style="left:1788.5px;top:460.5px;" width="24" height="22" viewBox="0 0 22 20"><path d="M11,1.5 L20.5,18.5 H1.5 Z" fill="#f39c4a"/><path d="M11,7.5 V12.8" stroke="#fff" stroke-width="2.4"/><circle cx="11" cy="15.6" r="1.3" fill="#fff"/></svg>
<span id="t61" class="t m" style="left:1819.0px;top:461.3px;font-size:25.5px;color:#f08c3a;font-weight:700;font-family:'Liberation Sans', sans-serif;transform-origin:left center;transform:scaleX(0.9121);">Sample</span>
<span id="t62" class="t m" style="left:1941.0px;top:461.3px;font-size:25.5px;color:#666;font-weight:400;font-family:'Liberation Sans', sans-serif;transform-origin:left center;transform:scaleX(0.9202);">10000 records</span>
<div class="r" style="left:2116px;top:448px;width:2px;height:50px;background:#e2e2e2;"></div>
<span id="t63" class="t m" style="left:2142.0px;top:461.3px;font-size:25.5px;color:#333;font-weight:400;font-family:'Liberation Sans', sans-serif;transform-origin:left center;transform:scaleX(0.8732);">Run on DSS</span>
<div class="r" style="left:2291px;top:448px;width:2px;height:50px;background:#e2e2e2;"></div>
<svg class="r" style="left:2329px;top:460px;" width="26" height="26" viewBox="0 0 26 26"><g fill="none" stroke="#222" stroke-width="3.2"><path d="M4,11 A9.2,9.2 0 0 1 20,7.5"/><path d="M22,15 A9.2,9.2 0 0 1 6,18.5"/></g><g fill="#222"><path d="M23.5,2 V11 H14.5 Z"/><path d="M2.5,24 V15 H11.5 Z"/></g></svg>
<svg class="r" style="left:2388px;top:460px;" width="24" height="24" viewBox="0 0 24 24"><g stroke="#222" stroke-width="3" fill="none"><path d="M5,19 L19,5"/></g><g fill="#222"><path d="M12,1.5 H22.5 V12 Z"/><path d="M12,22.5 H1.5 V12 Z"/></g></svg>
<svg class="r" style="left:0;top:0" width="2554" height="1432" viewBox="0 0 2554 1432"><path d="M1144,1098.4 H2221" stroke="#dedede" stroke-width="2"/>
<path d="M1133,1098.4 H1144" stroke="#8a8a8a" stroke-width="2"/>
<path d="M1144,1033.8 H2221" stroke="#dedede" stroke-width="2"/>
<path d="M1133,1033.8 H1144" stroke="#8a8a8a" stroke-width="2"/>
<path d="M1144,969.1 H2221" stroke="#dedede" stroke-width="2"/>
<path d="M1133,969.1 H1144" stroke="#8a8a8a" stroke-width="2"/>
<path d="M1144,904.4 H2221" stroke="#dedede" stroke-width="2"/>
<path d="M1133,904.4 H1144" stroke="#8a8a8a" stroke-width="2"/>
<path d="M1144,839.8 H2221" stroke="#dedede" stroke-width="2"/>
<path d="M1133,839.8 H1144" stroke="#8a8a8a" stroke-width="2"/>
<path d="M1144,775.1 H2221" stroke="#dedede" stroke-width="2"/>
<path d="M1133,775.1 H1144" stroke="#8a8a8a" stroke-width="2"/>
<path d="M1144,710.4 H2221" stroke="#dedede" stroke-width="2"/>
<path d="M1133,710.4 H1144" stroke="#8a8a8a" stroke-width="2"/>
<path d="M1144,645.7 H2221" stroke="#dedede" stroke-width="2"/>
<path d="M1133,645.7 H1144" stroke="#8a8a8a" stroke-width="2"/>
<path d="M1144,581.1 H2221" stroke="#dedede" stroke-width="2"/>
<path d="M1133,581.1 H1144" stroke="#8a8a8a" stroke-width="2"/>
<path d="M1133,1163 H1144" stroke="#8a8a8a" stroke-width="2"/>
<path d="M1166.12,1117.33C1167.79,1119.22,1184.82,1146.92,1188.98,1143.2S1210.59,1080.41,1211.09,1078.53S1233.29,977.2,1233.95,975.06S1249.54,928.49,1256.81,929.79S1272.48,978.92,1278.93,981.52S1296.97,971.46,1301.78,975.06S1321.22,1062,1323.9,1065.59S1339.14,1033.26,1346.76,1033.26S1367.36,1062.24,1369.61,1065.59S1383.34,1096.43,1390.26,1097.93S1411.46,1075.17,1413.12,1072.06S1434.49,1016.1,1435.23,1013.86S1450.6,936.25,1458.09,936.25S1472.71,936.25,1480.21,936.25S1502.22,886.91,1503.07,884.52S1525.42,808.78,1525.92,806.91S1541.4,714,1548.04,716.38S1568.93,823.02,1570.9,826.32S1590.78,790.55,1593.02,793.98S1615.5,895.8,1615.87,897.45S1636.76,997.68,1638.73,994.46S1657.99,842.1,1659.37,839.25S1677.98,913.14,1682.23,916.85S1696.85,923.32,1704.35,923.32S1719.71,923.32,1727.21,923.32S1749.1,872.86,1749.33,871.58S1770.21,667.98,1772.18,664.64S1787.62,652.47,1795.04,651.71S1812.9,648.95,1817.16,645.24S1832.61,594.31,1840.01,593.5S1861.39,636.53,1862.13,638.77S1884.66,727.75,1884.99,729.31S1905.83,848.9,1907.85,852.18S1924.62,810.49,1929.23,806.91S1948.46,823.6,1952.08,819.85S1971.22,757.98,1974.2,761.65S1992.45,874.4,1997.06,878.05S2018.68,802.32,2019.18,800.45S2039.9,713.33,2042.04,709.91S2059.19,726.04,2064.89,722.84S2080.79,686.86,2087.01,684.04S2102.59,702.18,2109.87,703.44S2127.68,713.62,2131.99,709.91S2151.94,570.4,2154.84,574.1S2172.42,771.34,2177.7,768.11S2197.79,565.72,2198.34,567.64S2221.19,948.96,2221.2,949.19" fill="none" stroke="#1f77b4" stroke-opacity="0.8" stroke-width="2.1"/>
<path d="M1144,1149.67C1147.4,1150.66,1160.42,1159.33,1166.12,1156.13S1187.32,1126.91,1188.98,1123.8S1208.44,1075.65,1211.09,1072.06S1232.6,1055.57,1233.95,1052.66S1256.27,957.6,1256.81,955.66S1275.48,887.25,1278.93,890.99S1297.1,1003.76,1301.78,1007.39S1317.48,998.29,1323.9,1000.92S1339.14,1065.59,1346.76,1065.59S1362.36,1065.59,1369.61,1065.59S1383.44,1050.94,1390.26,1052.66S1408.32,1082.13,1413.12,1078.53S1429.73,1023.64,1435.23,1020.33S1457.04,1042.33,1458.09,1039.73S1480.01,859.85,1480.21,858.65S1495.45,768.11,1503.07,768.11S1518.43,768.11,1525.92,768.11S1546.2,777.82,1548.04,781.05S1564.38,849.66,1570.9,852.18S1591.76,797.65,1593.02,800.45S1615.5,954,1615.87,955.66S1631.5,1000.56,1638.73,1000.92S1657.84,965.08,1659.37,962.12S1680.75,919.84,1682.23,916.85S1703.54,873.92,1704.35,871.58S1721,790.35,1727.21,787.51S1744.52,784.64,1749.33,781.05S1771.63,640.75,1772.18,638.77S1793.85,609.18,1795.04,606.44S1816.12,526.24,1817.16,528.83S1839.26,720.59,1840.01,722.84S1860.42,693.83,1862.13,696.98S1880.39,822.59,1884.99,826.32S1900.91,834.52,1907.85,832.78S1922.66,789.82,1929.23,787.51S1945.69,817.2,1952.08,819.85S1971.37,810.55,1974.2,806.91S1994.91,765.04,1997.06,761.65S2018.42,738.03,2019.18,735.78S2041.47,627.83,2042.04,625.84S2061.37,570.36,2064.89,574.1S2086.55,669.3,2087.01,671.11S2103.19,751.04,2109.87,748.71S2124.8,659.67,2131.99,658.17S2154.39,740.44,2154.84,742.24S2172.16,836.17,2177.7,839.25S2197.8,772.68,2198.34,774.58S2221.16,1007.02,2221.2,1007.39" fill="none" stroke="#aec7e8" stroke-opacity="0.8" stroke-width="2.1"/>
<path d="M1144,1156.13C1146.75,1154.53,1158.62,1143.27,1166.12,1143.2S1185.84,1159.83,1188.98,1156.13S1210.46,1093.54,1211.09,1091.46S1232.71,1010.21,1233.95,1007.39S1249.85,989.93,1256.81,987.99S1271.43,994.42,1278.93,994.46S1295.52,985.21,1301.78,987.99S1321.45,1010.34,1323.9,1013.86S1344.22,1049.07,1346.76,1052.66S1366.62,1074.96,1369.61,1078.53S1383.62,1102.38,1390.26,1104.4S1411.14,1094.77,1413.12,1091.46S1430.33,1023.89,1435.23,1020.33S1451.8,1029.55,1458.09,1026.79S1479.32,983.95,1480.21,981.52S1496.61,906.66,1503.07,903.92S1518.51,961.35,1525.92,962.12S1546.85,913.13,1548.04,910.39S1563.86,860.44,1570.9,858.65S1591.93,894.82,1593.02,897.45S1615.31,966.6,1615.87,968.59S1635.09,1062.75,1638.73,1059.13S1658.2,938.93,1659.37,936.25S1675.19,966.79,1682.23,968.59S1699.95,965.81,1704.35,962.12S1719.71,884.52,1727.21,884.52S1741.83,884.52,1749.33,884.52S1771.26,822.34,1772.18,819.85S1787.62,762.42,1795.04,761.65S1809.9,812.08,1817.16,813.38S1836.95,764.43,1840.01,768.11S1860.89,862.33,1862.13,865.12S1881.9,888.26,1884.99,884.52S1906.09,797.31,1907.85,800.45S1925.32,951.98,1929.23,955.66S1950.85,835.57,1952.08,832.78S1966.83,853.12,1974.2,852.18S1993.33,830.06,1997.06,826.32S2015.94,810.63,2019.18,806.91S2034.98,776.58,2042.04,774.58S2060.71,797.7,2064.89,793.98S2083.58,732.04,2087.01,735.78S2102.74,847.33,2109.87,845.72S2126.72,732.74,2131.99,729.31S2150.3,816.11,2154.84,819.85S2170.5,813.98,2177.7,813.38S2196.74,797.44,2198.34,800.45S2221.16,1026.41,2221.2,1026.79" fill="none" stroke="#ff7f0e" stroke-opacity="0.8" stroke-width="2.1"/>
<path d="M1166.12,1156.13C1168.33,1154.25,1186.19,1140.35,1188.98,1136.73S1207.28,1101.68,1211.09,1097.93S1232.78,1081.27,1233.95,1078.53S1253.81,959.33,1256.81,955.66S1278.04,1017.91,1278.93,1020.33S1294.3,1078.85,1301.78,1078.53S1316.65,1021.66,1323.9,1020.33S1344.8,1068.73,1346.76,1072.06S1367.04,1094.46,1369.61,1097.93S1383.9,1127.89,1390.26,1130.26S1408.38,1127.41,1413.12,1123.8S1433.12,1075.44,1435.23,1072.06S1454.38,1056.41,1458.09,1052.66S1479.12,1029.44,1480.21,1026.79S1498.55,946.46,1503.07,942.72S1518.68,934.91,1525.92,936.25S1540.66,963.03,1548.04,962.12S1563.51,930.69,1570.9,929.79S1587.71,952.25,1593.02,955.66S1613.68,965.14,1615.87,968.59S1631.58,1051.83,1638.73,1052.66S1656.27,985.11,1659.37,981.52S1674.86,1006.45,1682.23,1007.39S1701.53,991.62,1704.35,987.99S1725.89,952.04,1727.21,949.19S1741.9,890.25,1749.33,890.99S1771.57,957.72,1772.18,955.66S1792.92,739.15,1795.04,735.78S1815.2,874.76,1817.16,878.05S1832.85,892.53,1840.01,890.99S1854.84,859.86,1862.13,858.65S1883.44,881.45,1884.99,884.52S1900.77,947.74,1907.85,949.19S1922.75,899.86,1929.23,897.45S1947.35,900.31,1952.08,903.92S1970.66,990.72,1974.2,994.46S1995.17,952.44,1997.06,949.19S2012.33,918.95,2019.18,916.85S2040.3,939.45,2042.04,936.25S2063.89,835.33,2064.89,832.78S2081.76,809.95,2087.01,813.38S2104.8,861.61,2109.87,865.12S2125.1,847.76,2131.99,845.72S2148.39,854.92,2154.84,852.18S2176.92,824.07,2177.7,826.32S2198.12,967.33,2198.34,968.59S2221,1064.74,2221.2,1065.59" fill="none" stroke="#ffbb78" stroke-opacity="0.8" stroke-width="2.1"/>
<path d="M1166.12,1156.13C1167.79,1154.24,1186.18,1133.89,1188.98,1130.26S1208.95,1101.32,1211.09,1097.93S1226.33,1059.13,1233.95,1059.13S1249.31,1059.13,1256.81,1059.13S1271.52,1013.06,1278.93,1013.86S1299.31,1062.07,1301.78,1065.59S1320.15,1074.78,1323.9,1078.53S1339.14,1110.86,1346.76,1110.86S1362.36,1110.86,1369.61,1110.86S1383.01,1110.86,1390.26,1110.86S1411.01,1101.3,1413.12,1097.93S1427.81,1038.99,1435.23,1039.73S1453.42,1100.77,1458.09,1104.4S1478.05,1094.86,1480.21,1091.46S1502.46,1002.99,1503.07,1000.92S1525.11,938.58,1525.92,936.25S1541.48,869.11,1548.04,871.58S1564.34,953.18,1570.9,955.66S1587.8,887.54,1593.02,890.99S1615.16,985.77,1615.87,987.99S1636.98,1030.16,1638.73,1033.26S1657.4,1062.37,1659.37,1065.59S1679.15,1108.08,1682.23,1104.4S1703.85,1015.73,1704.35,1013.86S1726,939.01,1727.21,936.25S1741.94,909.48,1749.33,910.39S1769.64,946.31,1772.18,942.72S1789.11,848.76,1795.04,845.72S1812.84,913.15,1817.16,916.85S1837.63,933.28,1840.01,929.79S1857,778.06,1862.13,774.58S1884.59,902.22,1884.99,903.92S1900.54,969.3,1907.85,968.59S1922.25,905.59,1929.23,903.92S1947,958.62,1952.08,962.12S1970.49,940,1974.2,936.25S1989.56,916.85,1997.06,916.85S2011.68,916.85,2019.18,916.85S2034.57,840.31,2042.04,839.25S2058.19,912.69,2064.89,910.39S2083.45,830.06,2087.01,826.32S2107.83,868.45,2109.87,865.12S2130.93,752.57,2131.99,755.18S2153.3,978.46,2154.84,981.52S2176.03,848.77,2177.7,845.72S2197.98,876.46,2198.34,878.05S2221.15,1078.1,2221.2,1078.53" fill="none" stroke="#2ca02c" stroke-opacity="0.8" stroke-width="2.1"/>
<path d="M1166.12,1143.2C1169.69,1144.12,1184.44,1153.33,1188.98,1149.67S1208.67,1107.9,1211.09,1104.4S1226.9,1083,1233.95,1085S1254.47,1120.8,1256.81,1117.33S1275.86,1024.01,1278.93,1020.33S1299.63,1062.2,1301.78,1065.59S1321.75,1088.07,1323.9,1091.46S1344.22,1133.14,1346.76,1136.73S1362.38,1156.46,1369.61,1156.13S1385.63,1140.22,1390.26,1136.73S1406.16,1125.74,1413.12,1123.8S1430.8,1121.02,1435.23,1117.33S1453.35,1069.21,1458.09,1065.59S1473.9,1074.8,1480.21,1072.06S1497.3,1042.99,1503.07,1039.73S1519.66,1048.97,1525.92,1046.19S1540.66,1019.42,1548.04,1020.33S1567.66,1048.95,1570.9,1052.66S1586.5,1069.54,1593.02,1072.06S1611.02,1074.86,1615.87,1078.53S1633.29,1126.93,1638.73,1123.8S1655.2,1062.71,1659.37,1059.13S1674.85,1090.56,1682.23,1091.46S1701.12,1069.31,1704.35,1065.59S1726.48,1041.95,1727.21,1039.73S1747.29,933.12,1749.33,929.79S1765.7,965.88,1772.18,968.59S1790.19,971.47,1795.04,975.06S1810.58,1048.65,1817.16,1046.19S1834.11,958.72,1840.01,955.66S1859,1016.63,1862.13,1020.33S1878.53,1004.65,1884.99,1007.39S1900.55,1038.98,1907.85,1039.73S1922.81,1011.38,1929.23,1013.86S1944.68,1058.29,1952.08,1059.13S1973.39,1022.66,1974.2,1020.33S1989.89,928.27,1997.06,929.79S2015.65,1023.05,2019.18,1026.79S2037.29,978.75,2042.04,975.06S2058.18,979.24,2064.89,981.52S2079.52,994.39,2087.01,994.46S2104.24,984.76,2109.87,981.52S2126.95,965.07,2131.99,968.59S2149.07,1010.59,2154.84,1013.86S2170.45,994.46,2177.7,994.46S2191.09,994.46,2198.34,994.46S2221.07,1116.65,2221.2,1117.33" fill="none" stroke="#98df8a" stroke-opacity="0.8" stroke-width="2.1"/>
<path d="M1133,529 H1144 V1176" fill="none" stroke="#000" stroke-width="2.4"/>
<path d="M1133,1163 H2221 V1175" fill="none" stroke="#000" stroke-width="2.2"/>
<path d="M1211.1,1164 V1176" stroke="#909090" stroke-width="2"/>
<path d="M1278.9,1164 V1176" stroke="#909090" stroke-width="2"/>
<path d="M1346.8,1164 V1176" stroke="#909090" stroke-width="2"/>
<path d="M1413.1,1164 V1176" stroke="#909090" stroke-width="2"/>
<path d="M1480.2,1164 V1176" stroke="#909090" stroke-width="2"/>
<path d="M1548.0,1164 V1176" stroke="#909090" stroke-width="2"/>
<path d="M1615.9,1164 V1176" stroke="#909090" stroke-width="2"/>
<path d="M1682.2,1164 V1176" stroke="#909090" stroke-width="2"/>
<path d="M1749.3,1164 V1176" stroke="#909090" stroke-width="2"/>
<path d="M1817.2,1164 V1176" stroke="#909090" stroke-width="2"/>
<path d="M1885.0,1164 V1176" stroke="#909090" stroke-width="2"/>
<path d="M1952.1,1164 V1176" stroke="#909090" stroke-width="2"/>
<path d="M2019.2,1164 V1176" stroke="#909090" stroke-width="2"/>
<path d="M2087.0,1164 V1176" stroke="#909090" stroke-width="2"/>
<path d="M2154.8,1164 V1176" stroke="#909090" stroke-width="2"/></svg>
<span id="t64" class="t" style="right:1428.0px;top:1151.8px;font-size:22.5px;color:#333;font-weight:400;font-family:'Liberation Sans', sans-serif;transform-origin:right center;">0</span>
<span id="t65" class="t" style="right:1428.0px;top:1087.1px;font-size:22.5px;color:#333;font-weight:400;font-family:'Liberation Sans', sans-serif;transform-origin:right center;">10</span>
<span id="t66" class="t" style="right:1428.0px;top:1022.4px;font-size:22.5px;color:#333;font-weight:400;font-family:'Liberation Sans', sans-serif;transform-origin:right center;">20</span>
<span id="t67" class="t" style="right:1428.0px;top:957.7px;font-size:22.5px;color:#333;font-weight:400;font-family:'Liberation Sans', sans-serif;transform-origin:right center;">30</span>
<span id="t68" class="t" style="right:1428.0px;top:893.1px;font-size:22.5px;color:#333;font-weight:400;font-family:'Liberation Sans', sans-serif;transform-origin:right center;">40</span>
<span id="t69" class="t" style="right:1428.0px;top:828.4px;font-size:22.5px;color:#333;font-weight:400;font-family:'Liberation Sans', sans-serif;transform-origin:right center;">50</span>
<span id="t70" class="t" style="right:1428.0px;top:763.7px;font-size:22.5px;color:#333;font-weight:400;font-family:'Liberation Sans', sans-serif;transform-origin:right center;">60</span>
<span id="t71" class="t" style="right:1428.0px;top:699.1px;font-size:22.5px;color:#333;font-weight:400;font-family:'Liberation Sans', sans-serif;transform-origin:right center;">70</span>
<span id="t72" class="t" style="right:1428.0px;top:634.4px;font-size:22.5px;color:#333;font-weight:400;font-family:'Liberation Sans', sans-serif;transform-origin:right center;">80</span>
<span id="t73" class="t" style="right:1428.0px;top:569.7px;font-size:22.5px;color:#333;font-weight:400;font-family:'Liberation Sans', sans-serif;transform-origin:right center;">90</span>
<span id="t74" class="t" style="right:1419.0px;top:1174.5px;font-size:22.5px;color:#333;transform-origin:right top;transform:rotate(-45deg) scaleX(0.955);">2013-04-01</span>
<span id="t75" class="t" style="right:1351.9px;top:1174.5px;font-size:22.5px;color:#333;transform-origin:right top;transform:rotate(-45deg) scaleX(0.955);">2013-07-01</span>
<span id="t76" class="t" style="right:1284.1px;top:1174.5px;font-size:22.5px;color:#333;transform-origin:right top;transform:rotate(-45deg) scaleX(0.955);">2013-10-01</span>
<span id="t77" class="t" style="right:1216.2px;top:1174.5px;font-size:22.5px;color:#333;transform-origin:right top;transform:rotate(-45deg) scaleX(0.955);">2014-01-01</span>
<span id="t78" class="t" style="right:1149.9px;top:1174.5px;font-size:22.5px;color:#333;transform-origin:right top;transform:rotate(-45deg) scaleX(0.955);">2014-04-01</span>
<span id="t79" class="t" style="right:1082.8px;top:1174.5px;font-size:22.5px;color:#333;transform-origin:right top;transform:rotate(-45deg) scaleX(0.955);">2014-07-01</span>
<span id="t80" class="t" style="right:1015.0px;top:1174.5px;font-size:22.5px;color:#333;transform-origin:right top;transform:rotate(-45deg) scaleX(0.955);">2014-10-01</span>
<span id="t81" class="t" style="right:947.1px;top:1174.5px;font-size:22.5px;color:#333;transform-origin:right top;transform:rotate(-45deg) scaleX(0.955);">2015-01-01</span>
<span id="t82" class="t" style="right:880.8px;top:1174.5px;font-size:22.5px;color:#333;transform-origin:right top;transform:rotate(-45deg) scaleX(0.955);">2015-04-01</span>
<span id="t83" class="t" style="right:813.7px;top:1174.5px;font-size:22.5px;color:#333;transform-origin:right top;transform:rotate(-45deg) scaleX(0.955);">2015-07-01</span>
<span id="t84" class="t" style="right:745.8px;top:1174.5px;font-size:22.5px;color:#333;transform-origin:right top;transform:rotate(-45deg) scaleX(0.955);">2015-10-01</span>
<span id="t85" class="t" style="right:678.0px;top:1174.5px;font-size:22.5px;color:#333;transform-origin:right top;transform:rotate(-45deg) scaleX(0.955);">2016-01-01</span>
<span id="t86" class="t" style="right:610.9px;top:1174.5px;font-size:22.5px;color:#333;transform-origin:right top;transform:rotate(-45deg) scaleX(0.955);">2016-04-01</span>
<span id="t87" class="t" style="right:543.8px;top:1174.5px;font-size:22.5px;color:#333;transform-origin:right top;transform:rotate(-45deg) scaleX(0.955);">2016-07-01</span>
<span id="t88" class="t" style="right:476.0px;top:1174.5px;font-size:22.5px;color:#333;transform-origin:right top;transform:rotate(-45deg) scaleX(0.955);">2016-10-01</span>
<span id="t89" class="t" style="right:408.2px;top:1174.5px;font-size:22.5px;color:#333;transform-origin:right top;transform:rotate(-45deg) scaleX(0.955);">2017-01-01</span>
<span id="t90" class="t" style="left:1063px;top:836px;font-size:28.5px;color:#333;transform:translate(-50%,-50%) rotate(-90deg) scaleX(0.985);">Count of records</span>
<span id="t91" class="t m" style="left:1613.0px;top:1275.6px;font-size:27.5px;color:#333;font-weight:400;font-family:'Liberation Sans', sans-serif;transform-origin:left center;transform:scaleX(1.0451);">order_date</span>
<div class="r" style="left:2251px;top:519px;width:26px;height:26px;background:#5f9ac8;"></div>
<span id="t92" class="t m" style="left:2281.0px;top:521.1px;font-size:24px;color:#222;font-weight:400;font-family:'Liberation Sans', sans-serif;transform-origin:left center;transform:scaleX(0.9474);">Hoodie</span>
<div class="r" style="left:2251px;top:549px;width:26px;height:26px;background:#c2d4ec;"></div>
<span id="t93" class="t m" style="left:2281.0px;top:551.1px;font-size:24px;color:#222;font-weight:400;font-family:'Liberation Sans', sans-serif;transform-origin:left center;transform:scaleX(0.9091);">White T-Shirt M</span>
<div class="r" style="left:2251px;top:579px;width:26px;height:26px;background:#ff9e57;"></div>
<span id="t94" class="t m" style="left:2281.0px;top:581.1px;font-size:24px;color:#222;font-weight:400;font-family:'Liberation Sans', sans-serif;transform-origin:left center;transform:scaleX(0.9136);">Black T-Shirt M</span>
<div class="r" style="left:2251px;top:609px;width:26px;height:26px;background:#ffc998;"></div>
<span id="t95" class="t m" style="left:2281.0px;top:611.1px;font-size:24px;color:#222;font-weight:400;font-family:'Liberation Sans', sans-serif;transform-origin:left center;transform:scaleX(0.9062);">White T-Shirt F</span>
<div class="r" style="left:2251px;top:639px;width:26px;height:26px;background:#6cb96c;"></div>
<span id="t96" class="t m" style="left:2281.0px;top:641.1px;font-size:24px;color:#222;font-weight:400;font-family:'Liberation Sans', sans-serif;transform-origin:left center;transform:scaleX(0.9108);">Black T-Shirt F</span>
<div class="r" style="left:2251px;top:669px;width:26px;height:26px;background:#b2e6a6;"></div>
<span id="t97" class="t m" style="left:2281.0px;top:671.1px;font-size:24px;color:#222;font-weight:400;font-family:'Liberation Sans', sans-serif;transform-origin:left center;transform:scaleX(0.9440);">Tennis Shirt</span>
<div class="r" style="left:498px;top:1356px;width:1979px;height:2px;background:#dcdcdc;"></div>
<div class="r" style="left:536px;top:1358px;width:2px;height:74px;background:#dcdcdc;"></div>
<div class="r" style="left:705px;top:1356px;width:168px;height:76px;background:#fff;"></div>
<div class="r" style="left:704px;top:1358px;width:2px;height:74px;background:#dcdcdc;"></div>
<div class="r" style="left:872px;top:1358px;width:2px;height:74px;background:#dcdcdc;"></div>
<div class="r" style="left:562px;top:1372px;width:102px;height:5.5px;background:#78a6cd;"></div>
<div class="r" style="left:562px;top:1381.2px;width:92px;height:5.5px;background:#78a6cd;"></div>
<div class="r" style="left:562px;top:1390.4px;width:66px;height:5.5px;background:#78a6cd;"></div>
<div class="r" style="left:562px;top:1399.6px;width:49px;height:5.5px;background:#78a6cd;"></div>
<div class="r" style="left:562px;top:1408.8px;width:48px;height:5.5px;background:#78a6cd;"></div>
<div class="r" style="left:562px;top:1418px;width:48px;height:5.5px;background:#78a6cd;"></div>
<svg class="r" style="left:674px;top:1368px;" width="22" height="26" viewBox="0 0 22 26"><g fill="none" stroke="#c4c4c4" stroke-width="2"><path d="M1,5.5 H21"/><path d="M7,5 V2.2 Q7,1.2 8,1.2 H14 Q15,1.2 15,2.2 V5"/><path d="M3.5,6 V22.5 Q3.5,24.5 5.5,24.5 H16.5 Q18.5,24.5 18.5,22.5 V6"/><path d="M8,9.5 V20.5 M11,9.5 V20.5 M14,9.5 V20.5"/></g></svg>
<svg class="r" style="left:667px;top:1400px;" width="30" height="30" viewBox="0 0 30 30"><g fill="none" stroke="#c4c4c4" stroke-width="2"><path d="M2,10 L9,2 H18 V22 H2 Z"/><path d="M2,10 H9 V2"/><path d="M18,8 H28 V29 H12 V22"/><path d="M12,16 L18,9"/></g></svg>
<svg class="r" style="left:842px;top:1368px;" width="22" height="26" viewBox="0 0 22 26"><g fill="none" stroke="#c4c4c4" stroke-width="2"><path d="M1,5.5 H21"/><path d="M7,5 V2.2 Q7,1.2 8,1.2 H14 Q15,1.2 15,2.2 V5"/><path d="M3.5,6 V22.5 Q3.5,24.5 5.5,24.5 H16.5 Q18.5,24.5 18.5,22.5 V6"/><path d="M8,9.5 V20.5 M11,9.5 V20.5 M14,9.5 V20.5"/></g></svg>
<svg class="r" style="left:835px;top:1400px;" width="30" height="30" viewBox="0 0 30 30"><g fill="none" stroke="#c4c4c4" stroke-width="2"><path d="M2,10 L9,2 H18 V22 H2 Z"/><path d="M2,10 H9 V2"/><path d="M18,8 H28 V29 H12 V22"/><path d="M12,16 L18,9"/></g></svg>
<svg class="r" style="left:705px;top:1358px;" width="168" height="74" viewBox="0 0 168 74"><path d="M17.3,60.2L19.7,62.4L22.0,57.0L24.4,48.3L26.7,44.5L29.0,48.9L31.4,48.3L33.7,55.9L36.1,53.2L38.5,55.9L40.6,58.6L43.0,56.4L45.3,51.6L47.7,45.1L50.0,45.1L52.3,40.7L54.7,34.3L57.0,26.7L59.4,35.9L61.7,33.2L64.1,41.8L66.4,49.9L68.6,37.0L71.0,43.4L73.3,44.0L75.6,44.0L77.9,39.7L80.3,22.4L82.7,21.3L85.0,20.7L87.4,16.4L89.7,20.2L92.0,27.8L94.4,38.0L96.6,34.3L99.0,35.3L101.3,30.5L103.7,40.2L106.0,33.7L108.4,26.1L110.7,27.2L113.0,24.0L115.4,25.6L117.7,26.1L120.1,14.8L122.5,31.0L124.6,14.2L127.0,46.2" fill="none" stroke="#1f77b4" stroke-width="0.9" stroke-opacity="0.6"/>
<path d="M15.0,62.9L17.3,63.5L19.7,60.8L22.0,56.4L24.4,54.8L26.7,46.7L29.0,41.3L31.4,51.0L33.7,50.5L36.1,55.9L38.5,55.9L40.6,54.8L43.0,57.0L45.3,52.1L47.7,53.7L50.0,38.6L52.3,31.0L54.7,31.0L57.0,32.1L59.4,38.0L61.7,33.7L64.1,46.7L66.4,50.5L68.6,47.2L71.0,43.4L73.3,39.7L75.6,32.6L77.9,32.1L80.3,20.2L82.7,17.5L85.0,11.0L87.4,27.2L89.7,25.1L92.0,35.9L94.4,36.4L96.6,32.6L99.0,35.3L101.3,34.3L103.7,30.5L106.0,28.3L108.4,19.1L110.7,14.8L113.0,22.9L115.4,29.4L117.7,21.8L120.1,28.8L122.5,37.0L124.6,31.6L127.0,51.0" fill="none" stroke="#aec7e8" stroke-width="0.9" stroke-opacity="0.6"/>
<path d="M15.0,63.5L17.3,62.4L19.7,63.5L22.0,58.1L24.4,51.0L26.7,49.4L29.0,49.9L31.4,49.4L33.7,51.6L36.1,54.8L38.5,57.0L40.6,59.1L43.0,58.1L45.3,52.1L47.7,52.6L50.0,48.9L52.3,42.4L54.7,47.2L57.0,42.9L59.4,38.6L61.7,41.8L64.1,47.8L66.4,55.3L68.6,45.1L71.0,47.8L73.3,47.2L75.6,40.7L77.9,40.7L80.3,35.3L82.7,30.5L85.0,34.8L87.4,31.0L89.7,39.1L92.0,40.7L94.4,33.7L96.6,46.7L99.0,36.4L101.3,38.0L103.7,35.9L106.0,34.3L108.4,31.6L110.7,33.2L113.0,28.3L115.4,37.5L117.7,27.8L120.1,35.3L122.5,34.8L124.6,33.7L127.0,52.6" fill="none" stroke="#ff7f0e" stroke-width="0.9" stroke-opacity="0.6"/>
<path d="M17.3,63.5L19.7,61.8L22.0,58.6L24.4,57.0L26.7,46.7L29.0,52.1L31.4,57.0L33.7,52.1L36.1,56.4L38.5,58.6L40.6,61.3L43.0,60.8L45.3,56.4L47.7,54.8L50.0,52.6L52.3,45.6L54.7,45.1L57.0,47.2L59.4,44.5L61.7,46.7L64.1,47.8L66.4,54.8L68.6,48.9L71.0,51.0L73.3,49.4L75.6,46.2L77.9,41.3L80.3,46.7L82.7,28.3L85.0,40.2L87.4,41.3L89.7,38.6L92.0,40.7L94.4,46.2L96.6,41.8L99.0,42.4L101.3,49.9L103.7,46.2L106.0,43.4L108.4,45.1L110.7,36.4L113.0,34.8L115.4,39.1L117.7,37.5L120.1,38.0L122.5,35.9L124.6,47.8L127.0,55.9" fill="none" stroke="#ffbb78" stroke-width="0.9" stroke-opacity="0.6"/>
<path d="M17.3,63.5L19.7,61.3L22.0,58.6L24.4,55.3L26.7,55.3L29.0,51.6L31.4,55.9L33.7,57.0L36.1,59.7L38.5,59.7L40.6,59.7L43.0,58.6L45.3,53.7L47.7,59.1L50.0,58.1L52.3,50.5L54.7,45.1L57.0,39.7L59.4,46.7L61.7,41.3L64.1,49.4L66.4,53.2L68.6,55.9L71.0,59.1L73.3,51.6L75.6,45.1L77.9,42.9L80.3,45.6L82.7,37.5L85.0,43.4L87.4,44.5L89.7,31.6L92.0,42.4L94.4,47.8L96.6,42.4L99.0,47.2L101.3,45.1L103.7,43.4L106.0,43.4L108.4,37.0L110.7,42.9L113.0,35.9L115.4,39.1L117.7,29.9L120.1,48.9L122.5,37.5L124.6,40.2L127.0,57.0" fill="none" stroke="#2ca02c" stroke-width="0.9" stroke-opacity="0.6"/>
<path d="M17.3,62.4L19.7,62.9L22.0,59.1L24.4,57.5L26.7,60.2L29.0,52.1L31.4,55.9L33.7,58.1L36.1,61.8L38.5,63.5L40.6,61.8L43.0,60.8L45.3,60.2L47.7,55.9L50.0,56.4L52.3,53.7L54.7,54.3L57.0,52.1L59.4,54.8L61.7,56.4L64.1,57.0L66.4,60.8L68.6,55.3L71.0,58.1L73.3,55.9L75.6,53.7L77.9,44.5L80.3,47.8L82.7,48.3L85.0,54.3L87.4,46.7L89.7,52.1L92.0,51.0L94.4,53.7L96.6,51.6L99.0,55.3L101.3,52.1L103.7,44.5L106.0,52.6L108.4,48.3L110.7,48.9L113.0,49.9L115.4,48.9L117.7,47.8L120.1,51.6L122.5,49.9L124.6,49.9L127.0,60.2" fill="none" stroke="#98df8a" stroke-width="0.9" stroke-opacity="0.6"/></svg>
<div class="r" style="left:896px;top:1374px;width:142px;height:52px;background:#3b99fc;box-shadow:inset -2px 0 0 rgba(0,0,0,0.12), inset 0 -2px 0 rgba(0,0,0,0.10);"></div>
<svg class="r" style="left:913px;top:1388px;" width="22" height="22" viewBox="0 0 22 22"><path d="M11,1.5 V20.5 M1.5,11 H20.5" stroke="#fff" stroke-width="5.4"/></svg>
<span id="t98" class="t m" style="left:945.0px;top:1388.7px;font-size:25px;color:#fff;font-weight:700;font-family:'Liberation Sans', sans-serif;transform-origin:left center;transform:scaleX(0.8523);">CHART</span>
<div class="r" style="left:0px;top:1380px;width:2477px;height:52px;background:linear-gradient(to bottom, rgba(0,0,0,0) 0%, rgba(0,0,0,0.07) 100%);pointer-events:none;"></div>
<div class="r" style="left:0px;top:178px;width:60px;height:1254px;background:linear-gradient(to right, rgba(0,0,0,0.035), rgba(0,0,0,0));"></div>
</div>
</body></html>
